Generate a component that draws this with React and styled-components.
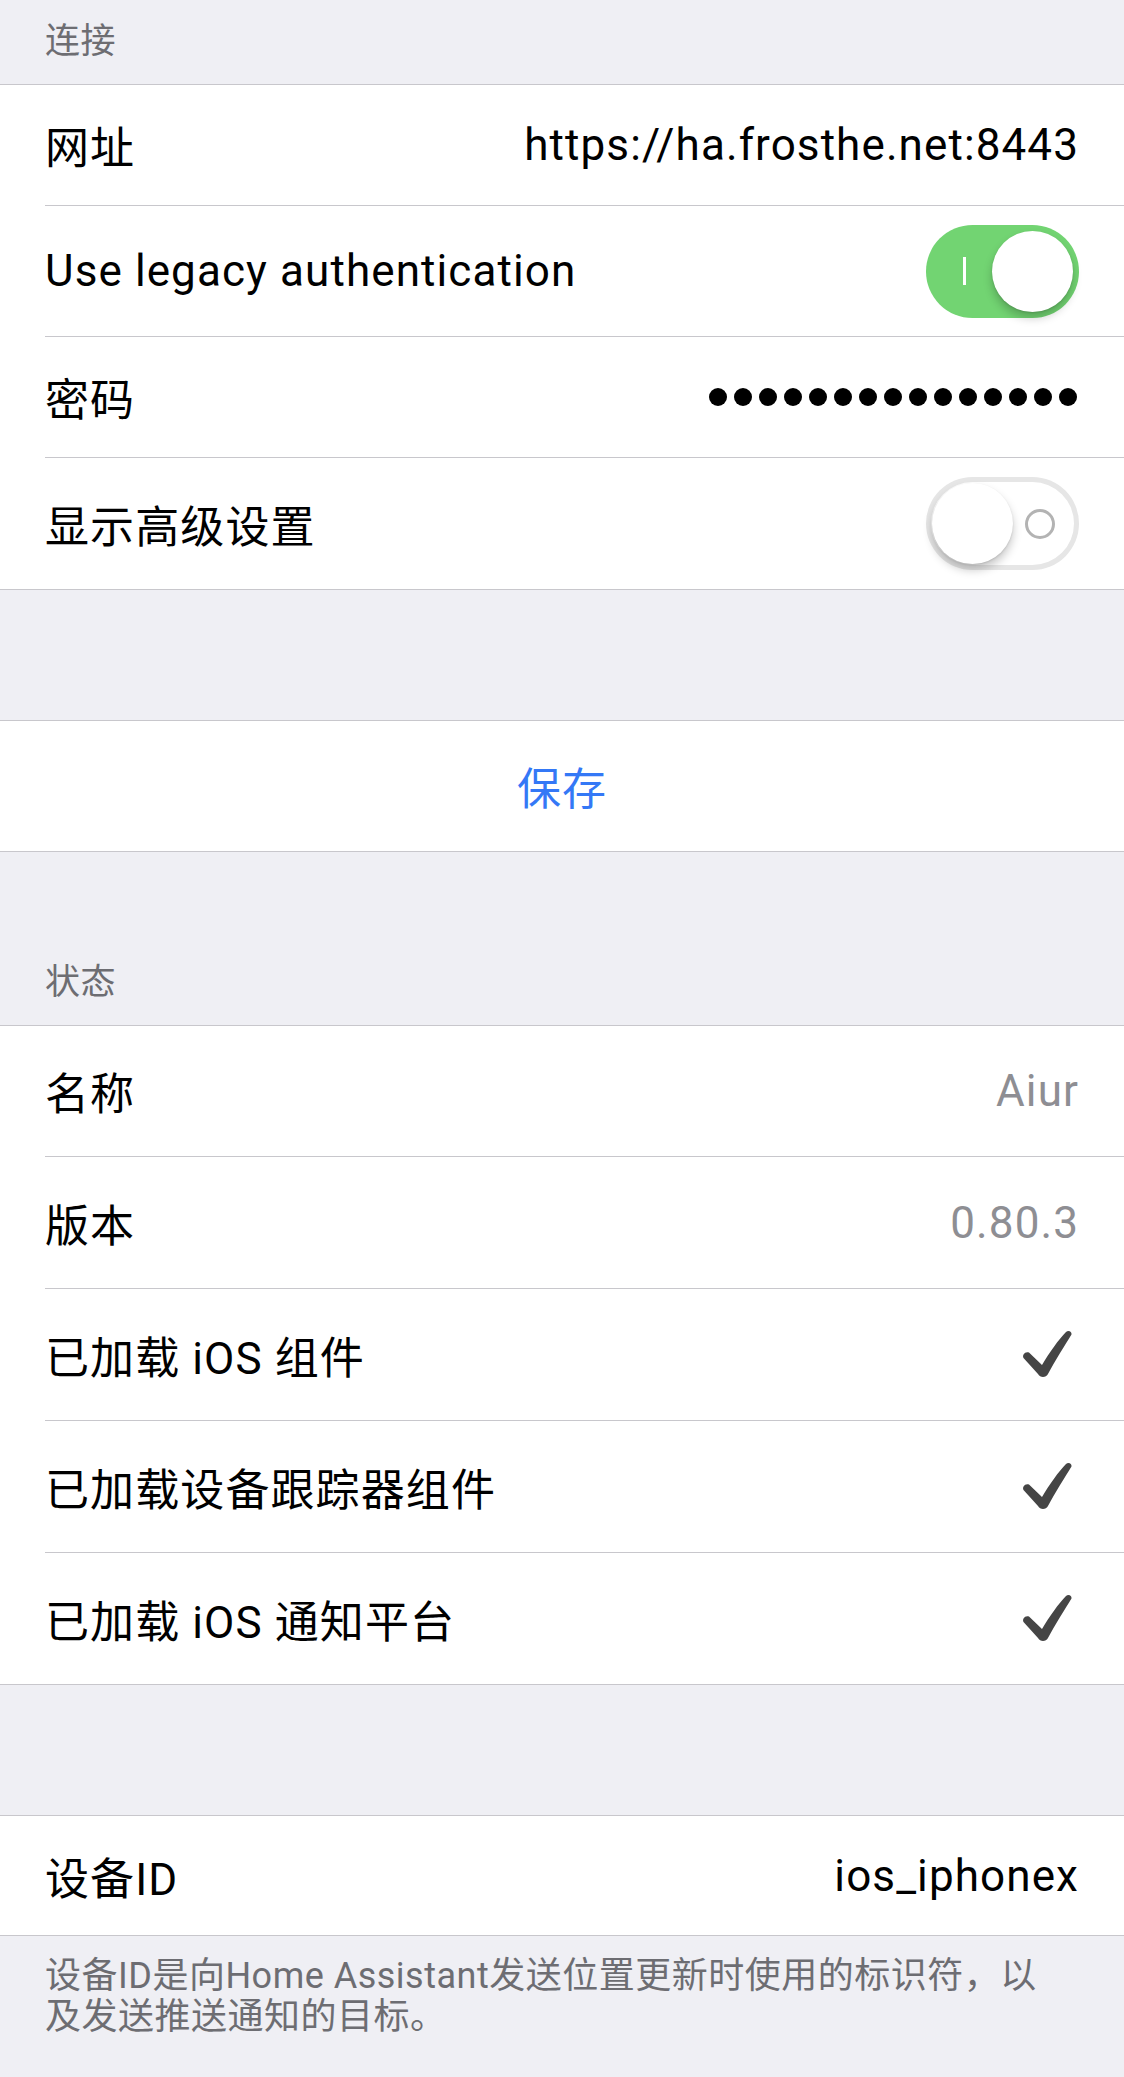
import React from 'react'
import styled, { createGlobalStyle } from 'styled-components'

const GlobalStyle = createGlobalStyle`
    body {
        margin: 0;
        background: #efeff4;
        font-family: "Roboto", "Noto Sans CJK SC", sans-serif;
        -webkit-font-smoothing: antialiased;
    }
`

function Switch({ on }) {
    return (
        <Track $on={on}>
            {on ? (
                <>
                    <OnMark />
                    <Knob />
                </>
            ) : (
                <>
                    <Knob />
                    <OffMark />
                </>
            )}
        </Track>
    )
}

function Check() {
    return (
        <CheckIcon viewBox="0 0 54 52">
            <path
                d="M2.5 29 C1 26 4 22 8 23.5 L21 36 C28 24 38 10 45 3 C47 1 51 2 50.5 5.5 C44 16 34 32 27 45 C25 49 19 49 17 45 Z"
                fill="#454545"
            />
        </CheckIcon>
    )
}

function App() {
    return (
        <Page>
            <GlobalStyle />

            <Header $h={84}>连接</Header>
            <Group>
                <Row $h={121}>
                    <Inner>
                        <Label>网址</Label>
                        <Value>https://ha.frosthe.net:8443</Value>
                    </Inner>
                </Row>
                <Row $h={131}>
                    <Inner>
                        <Label>Use legacy authentication</Label>
                        <Switch on />
                    </Inner>
                </Row>
                <Row $h={121}>
                    <Inner>
                        <Label>密码</Label>
                        <Dots>
                            {Array.from({ length: 15 }).map((_, i) => <Dot key={i} />)}
                        </Dots>
                    </Inner>
                </Row>
                <Row $h={131}>
                    <Inner $last>
                        <Label>显示高级设置</Label>
                        <Switch />
                    </Inner>
                </Row>
            </Group>

            <Spacer $h={130} />
            <Group>
                <SaveButton>保存</SaveButton>
            </Group>

            <Header $h={173}>状态</Header>
            <Group>
                <Row $h={131}>
                    <Inner>
                        <Label>名称</Label>
                        <Value $muted>Aiur</Value>
                    </Inner>
                </Row>
                <Row $h={132}>
                    <Inner>
                        <Label>版本</Label>
                        <Value $muted>0.80.3</Value>
                    </Inner>
                </Row>
                <Row $h={132}>
                    <Inner>
                        <Label>已加载 iOS 组件</Label>
                        <Check />
                    </Inner>
                </Row>
                <Row $h={132}>
                    <Inner>
                        <Label>已加载设备跟踪器组件</Label>
                        <Check />
                    </Inner>
                </Row>
                <Row $h={131}>
                    <Inner $last>
                        <Label>已加载 iOS 通知平台</Label>
                        <Check />
                    </Inner>
                </Row>
            </Group>

            <Spacer $h={130} />
            <Group>
                <Row $h={119}>
                    <Inner $last>
                        <Label>设备ID</Label>
                        <Value>ios_iphonex</Value>
                    </Inner>
                </Row>
            </Group>
            <Footer>
                设备ID是向Home Assistant发送位置更新时使用的标识符，以<br />
                及发送推送通知的目标。
            </Footer>
        </Page>
    )
}

export default App


const Page = styled.div`
    width: 1124px;
    min-height: 2077px;
    background: #efeff4;
`

const Header = styled.div`
    height: ${p => p.$h}px;
    display: flex;
    align-items: flex-end;
    padding: 0 45px 22px;
    box-sizing: border-box;
    font-size: 35px;
    line-height: 40px;
    letter-spacing: 0.5px;
    color: #6d6d72;
`

const Spacer = styled.div`
    height: ${p => p.$h}px;
`

const Group = styled.div`
    background: #fff;
    border-top: 1px solid #c8c7cc;
    border-bottom: 1px solid #c8c7cc;
`

const Row = styled.div`
    height: ${p => p.$h}px;
    padding-left: 45px;
    display: flex;
`

const Inner = styled.div`
    flex: 1;
    display: flex;
    align-items: center;
    justify-content: space-between;
    padding-right: 45px;
    border-bottom: ${p => (p.$last ? 'none' : '1px solid #c8c7cc')};
`

const Label = styled.span`
    font-size: 44px;
    letter-spacing: 1.1px;
    color: #000;
    white-space: nowrap;
`

const Value = styled.span`
    font-size: 44px;
    letter-spacing: 1.1px;
    color: ${p => (p.$muted ? '#8e8e93' : '#000')};
    white-space: nowrap;
`

const Dots = styled.div`
    display: flex;
    gap: 6.5px;
    margin-right: 2px;
`

const Dot = styled.span`
    width: 18.5px;
    height: 18.5px;
    border-radius: 50%;
    background: #000;
`

const Track = styled.div`
    width: 153px;
    height: 93px;
    border-radius: 47px;
    box-sizing: border-box;
    padding: 0 6px;
    display: flex;
    align-items: center;
    justify-content: ${p => (p.$on ? 'flex-end' : 'flex-start')};
    background: ${p => (p.$on ? '#72d472' : '#fff')};
    box-shadow: ${p => (p.$on ? 'none' : 'inset 0 0 0 5px #e6e6e6')};
`

const Knob = styled.div`
    width: 81px;
    height: 81px;
    border-radius: 50%;
    background: #fff;
    box-shadow: 0 6px 10px rgba(0, 0, 0, 0.22), 0 1px 2px rgba(0, 0, 0, 0.12);
`

const OnMark = styled.div`
    width: 3px;
    height: 28px;
    background: #fff;
    margin-right: 26px;
`

const OffMark = styled.div`
    width: 30px;
    height: 30px;
    box-sizing: border-box;
    border-radius: 50%;
    border: 3px solid #b3b3b3;
    margin-left: 12px;
`

const CheckIcon = styled.svg`
    width: 54px;
    height: 52px;
    margin-right: 4px;
`

const SaveButton = styled.div`
    height: 130px;
    display: flex;
    align-items: center;
    justify-content: center;
    font-size: 44px;
    letter-spacing: 1.1px;
    color: #3478f6;
`

const Footer = styled.div`
    padding: 20px 45px 0;
    font-size: 36px;
    line-height: 41px;
    letter-spacing: 0.5px;
    color: #6d6d72;
`
